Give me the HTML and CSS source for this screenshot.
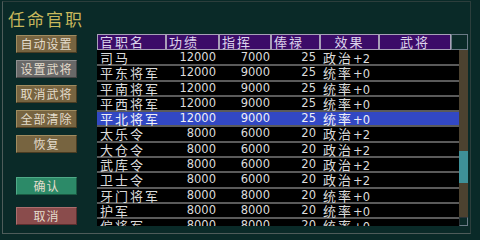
FILE: index.html
```html
<!DOCTYPE html>
<html lang="zh">
<head>
<meta charset="utf-8">
<link rel="stylesheet" href="styles.css">
</head>
<body>
<div class="window">
  <div class="title">任命官职</div>
  <div class="main">
    <div class="buttons">
      <div class="group">
        <div class="btn gold">自动设置</div>
        <div class="btn gray">设置武将</div>
        <div class="btn gold">取消武将</div>
        <div class="btn gold">全部清除</div>
        <div class="btn gold">恢复</div>
      </div>
      <div class="btn green ok">确认</div>
      <div class="btn red cancel">取消</div>
    </div>
    <div class="table">
      <div class="head">
        <div class="hc c1">官职名</div>
        <div class="hc c2">功绩</div>
        <div class="hc c3">指挥</div>
        <div class="hc c4">俸禄</div>
        <div class="hc c5 center">效果</div>
        <div class="hc c6 center">武将</div>
        <div class="corner"></div>
      </div>
      <div class="body">
        <div class="rows">
          <div class="row"><span class="c1">司马</span><span class="c2 n">12000</span><span class="c3 n">7000</span><span class="c4 n">25</span><span class="c5">政治<span class="n">+2</span></span></div>
          <div class="row"><span class="c1">平东将军</span><span class="c2 n">12000</span><span class="c3 n">9000</span><span class="c4 n">25</span><span class="c5">统率<span class="n">+0</span></span></div>
          <div class="row"><span class="c1">平南将军</span><span class="c2 n">12000</span><span class="c3 n">9000</span><span class="c4 n">25</span><span class="c5">统率<span class="n">+0</span></span></div>
          <div class="row"><span class="c1">平西将军</span><span class="c2 n">12000</span><span class="c3 n">9000</span><span class="c4 n">25</span><span class="c5">统率<span class="n">+0</span></span></div>
          <div class="row sel"><span class="c1">平北将军</span><span class="c2 n">12000</span><span class="c3 n">9000</span><span class="c4 n">25</span><span class="c5">统率<span class="n">+0</span></span></div>
          <div class="row"><span class="c1">太乐令</span><span class="c2 n">8000</span><span class="c3 n">6000</span><span class="c4 n">20</span><span class="c5">政治<span class="n">+2</span></span></div>
          <div class="row"><span class="c1">大仓令</span><span class="c2 n">8000</span><span class="c3 n">6000</span><span class="c4 n">20</span><span class="c5">政治<span class="n">+2</span></span></div>
          <div class="row"><span class="c1">武库令</span><span class="c2 n">8000</span><span class="c3 n">6000</span><span class="c4 n">20</span><span class="c5">政治<span class="n">+2</span></span></div>
          <div class="row"><span class="c1">卫士令</span><span class="c2 n">8000</span><span class="c3 n">6000</span><span class="c4 n">20</span><span class="c5">政治<span class="n">+2</span></span></div>
          <div class="row"><span class="c1">牙门将军</span><span class="c2 n">8000</span><span class="c3 n">8000</span><span class="c4 n">20</span><span class="c5">统率<span class="n">+0</span></span></div>
          <div class="row"><span class="c1">护军</span><span class="c2 n">8000</span><span class="c3 n">8000</span><span class="c4 n">20</span><span class="c5">统率<span class="n">+0</span></span></div>
          <div class="row"><span class="c1">偏将军</span><span class="c2 n">8000</span><span class="c3 n">8000</span><span class="c4 n">20</span><span class="c5">统率<span class="n">+0</span></span></div>
        </div>
        <div class="scroll">
          <div class="track"><div class="thumb"></div></div>
          <div class="sbcorner"></div>
        </div>
      </div>
    </div>
  </div>
</div>
</body>
</html>
```
FILE: styles.css
```css
html, body {
  margin: 0;
  padding: 0;
  background: #0a2a28;
  width: 480px;
  height: 236px;
  overflow: hidden;
  font-family: "Noto Sans CJK SC", "DejaVu Sans", sans-serif;
}
.window {
  box-sizing: border-box;
  margin: 1px 0 0 2px;
  width: 469px;
  height: 233px;
  border: 1px solid #4e5c5a;
  border-top-color: #2c3e3c;
  border-right-color: #2c3e3c;
}
.title {
  box-sizing: border-box;
  height: 32px;
  padding: 7px 0 0 5px;
  font-size: 17px;
  line-height: 20px;
  letter-spacing: 2px;
  color: #c8b85c;
}
.main {
  display: flex;
}
.buttons {
  display: flex;
  flex-direction: column;
  width: 61px;
  margin-left: 13px;
  padding-top: 1px;
}
.group {
  display: flex;
  flex-direction: column;
  gap: 7px;
}
.btn {
  box-sizing: border-box;
  height: 18px;
  font-size: 12px;
  line-height: 16px;
  letter-spacing: 1px;
  text-align: center;
  color: #e4dccc;
  border: 1px solid;
}
.gold {
  background: #776440;
  border-color: #a08c60 #4a3c22 #4a3c22 #a08c60;
}
.gray {
  background: #686868;
  border-color: #909090 #444 #444 #909090;
}
.green {
  background: #2c8a68;
  border-color: #50aa88 #1a5a42 #1a5a42 #50aa88;
}
.red {
  background: #8a4c4c;
  border-color: #aa6e6e #5a2e2e #5a2e2e #aa6e6e;
}
.ok {
  margin-top: 24px;
}
.cancel {
  margin-top: 12px;
}
.table {
  margin-left: 20px;
  width: 371px;
}
.head {
  display: flex;
  height: 16px;
}
.hc {
  box-sizing: border-box;
  height: 16px;
  background: #3c0c68;
  border: 1px solid #a8a0b8;
  color: #dcd4ec;
  font-size: 13px;
  line-height: 13px;
  padding-left: 2px;
  letter-spacing: 2px;
  white-space: nowrap;
}
.hc.center {
  text-align: center;
  padding-left: 0;
}
.corner {
  box-sizing: border-box;
  width: 17px;
  height: 16px;
  border: 1px solid #6a7a86;
}
.c1 { width: 69px; }
.c2 { width: 53px; }
.c3 { width: 52px; }
.c4 { width: 49px; }
.c5 { width: 59px; }
.c6 { width: 72px; }
.body {
  display: flex;
  height: 176px;
}
.rows {
  width: 362px;
  height: 176px;
  overflow: hidden;
  background: #000;
  padding-top: 1px;
  box-sizing: border-box;
}
.row {
  box-sizing: border-box;
  display: flex;
  height: 15.3px;
  border-bottom: 2px solid #5a5a5a;
  color: #dcdcdc;
  font-size: 13px;
  line-height: 13.3px;
  letter-spacing: 2px;
  white-space: nowrap;
}
.row.sel {
  background: #3248c4;
  color: #f0f0f8;
}
.row > span {
  display: block;
  box-sizing: border-box;
}
.row .c1 { padding-left: 3px; }
.row .n {
  font-family: "DejaVu Sans", sans-serif;
  font-size: 11.5px;
  letter-spacing: 0;
}
.row .c2 { text-align: right; padding-right: 3px; }
.row .c3 { text-align: right; padding-right: 1px; }
.row .c4 { text-align: right; padding-right: 4px; }
.row .c5 { padding-left: 3px; }
.scroll {
  width: 9px;
  display: flex;
  flex-direction: column;
}
.track {
  height: 168px;
  background: #4c4230;
  padding-top: 101px;
  box-sizing: border-box;
}
.thumb {
  height: 32px;
  background: #3e9098;
}
.sbcorner {
  box-sizing: border-box;
  height: 9px;
  border: 1px solid #6a7a86;
  border-top-color: #2a3438;
  border-left-color: #2a3438;
}
```
